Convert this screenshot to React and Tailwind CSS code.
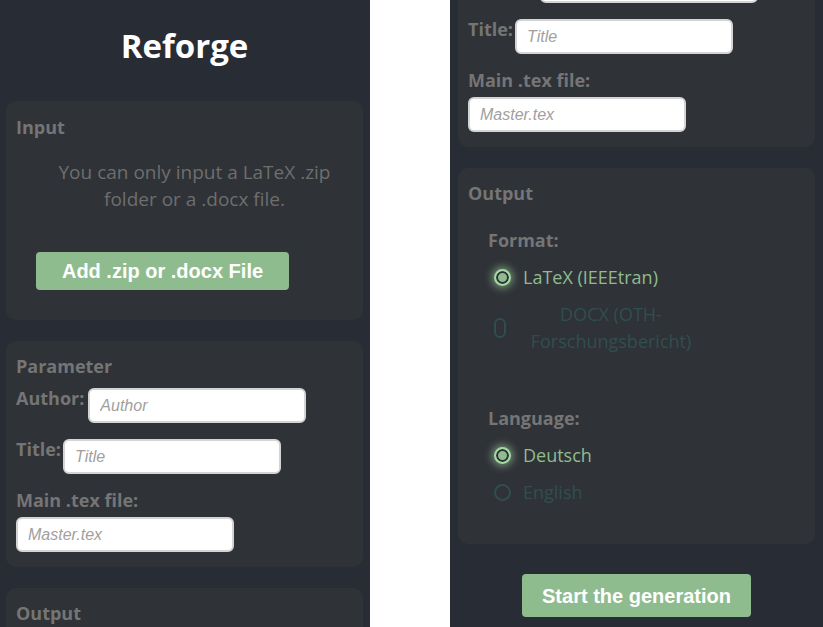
import { useState } from "react";

function Radio({ checked, disabled, squish }) {
  if (checked) {
    return (
      <span className="ml-[6px] block h-[17px] w-[17px] shrink-0 rounded-full border-2 border-[#a6d6a6] bg-[#8fbc8f] shadow-[inset_0_0_0_2px_#2c2f35,0_0_9px_2px_rgba(143,188,143,0.75)]" />
    );
  }
  if (squish) {
    return (
      <span className="ml-[6px] block h-[20px] w-[12px] shrink-0 rounded-full border-2 border-[#2f4f4f]" />
    );
  }
  return (
    <span
      className={
        "ml-[6px] block h-[17px] w-[17px] shrink-0 rounded-full border-2 " +
        (disabled ? "border-[#2f4f4f]" : "border-[#8fbc8f]")
      }
    />
  );
}

function Field({ placeholder, className }) {
  return (
    <input
      type="text"
      placeholder={placeholder}
      className={
        "h-[35px] w-[218px] shrink-0 rounded-md border-2 border-[#d4d4d4] bg-white px-[10px] font-['Liberation_Sans',Arial,sans-serif] text-base text-black placeholder:italic placeholder:text-[#a0a0a0] outline-none " +
        (className || "")
      }
    />
  );
}

function Page() {
  const [format, setFormat] = useState("latex");
  const [lang, setLang] = useState("de");

  return (
    <div className="w-[373px] bg-[#282c34] pb-5 font-['Segoe_UI','Open_Sans',sans-serif]">
      <h1 className="pt-[27px] text-center text-[33px] font-bold leading-[38px] text-white">
        Reforge
      </h1>

      {/* Input */}
      <section className="mx-2 mt-9 rounded-[10px] bg-[#2f3237] px-2.5 pb-[30px] pt-3">
        <h2 className="text-lg font-bold leading-7 text-[#757575]">Input</h2>
        <p className="ml-5 mt-[18px] px-4 text-center text-[19px] leading-[27px] text-[#6e6e6e]">
          You can only input a LaTeX .zip folder or a .docx file.
        </p>
        <button className="ml-5 mt-[39px] h-[38px] w-[253px] rounded bg-[#8fbc8f] font-['Liberation_Sans',Arial,sans-serif] text-xl font-bold text-white">
          Add .zip or .docx File
        </button>
      </section>

      {/* Parameter */}
      <section className="mx-2 mt-[21px] rounded-[10px] bg-[#2f3237] px-2.5 pb-[15px] pt-[11px]">
        <h2 className="text-lg font-bold leading-7 text-[#757575]">Parameter</h2>
        <div className="mt-1 flex items-start">
          <label className="pr-1 text-lg font-bold leading-7 text-[#757575]">Author:</label>
          <Field placeholder="Author" className="mt-1" />
        </div>
        <div className="mt-3 flex items-start">
          <label className="pr-[2px] text-lg font-bold leading-7 text-[#757575]">Title:</label>
          <Field placeholder="Title" className="mt-1" />
        </div>
        <label className="mt-3 block text-lg font-bold leading-7 text-[#757575]">
          Main .tex file:
        </label>
        <Field placeholder="Master.tex" className="mt-[3px] block" />
      </section>

      {/* Output */}
      <section className="mx-2 mt-[21px] rounded-[10px] bg-[#2f3237] px-2.5 pb-[38px] pt-[11px]">
        <h2 className="text-lg font-bold leading-7 text-[#757575]">Output</h2>

        <div className="ml-5 mt-[19px]">
          <h3 className="text-lg font-bold leading-7 text-[#757575]">Format:</h3>
          <div className="mt-[10px] flex flex-col gap-[10px]">
            <div
              className="flex cursor-pointer items-center"
              onClick={() => setFormat("latex")}
            >
              <Radio checked={format === "latex"} />
              <span className="ml-3 text-lg leading-[27px] text-[#8fbc8f]">
                LaTeX (IEEEtran)
              </span>
            </div>
            <div className="flex items-center">
              <Radio squish disabled />
              <span className="ml-[17px] w-[176px] text-center text-lg leading-[27px] text-[#2f4f4f]">
                DOCX (OTH-Forschungsbericht)
              </span>
            </div>
          </div>
        </div>

        <div className="ml-5 mt-[49px]">
          <h3 className="text-lg font-bold leading-7 text-[#757575]">Language:</h3>
          <div className="mt-[10px] flex flex-col gap-[10px]">
            <div
              className="flex cursor-pointer items-center"
              onClick={() => setLang("de")}
            >
              <Radio checked={lang === "de"} disabled />
              <span
                className={
                  "ml-3 text-lg leading-[27px] " +
                  (lang === "de" ? "text-[#8fbc8f]" : "text-[#2f4f4f]")
                }
              >
                Deutsch
              </span>
            </div>
            <div
              className="flex cursor-pointer items-center"
              onClick={() => setLang("en")}
            >
              <Radio checked={lang === "en"} disabled />
              <span
                className={
                  "ml-3 text-lg leading-[27px] " +
                  (lang === "en" ? "text-[#8fbc8f]" : "text-[#2f4f4f]")
                }
              >
                English
              </span>
            </div>
          </div>
        </div>
      </section>

      <button className="mx-auto mt-[30px] block h-[43px] w-[229px] rounded bg-[#8fbc8f] font-['Liberation_Sans',Arial,sans-serif] text-xl font-bold text-white">
        Start the generation
      </button>
    </div>
  );
}

export default function App() {
  return (
    <div className="flex h-[627px] w-[823px] overflow-hidden bg-white">
      {/* top of the page */}
      <div className="h-[627px] w-[370px] shrink-0 overflow-hidden">
        <div className="-ml-[2px]">
          <Page />
        </div>
      </div>
      <div className="w-[80px] shrink-0" />
      {/* same page, scrolled down */}
      <div className="h-[627px] w-[373px] shrink-0 overflow-hidden">
        <div className="-mt-[420px]">
          <Page />
        </div>
      </div>
    </div>
  );
}
